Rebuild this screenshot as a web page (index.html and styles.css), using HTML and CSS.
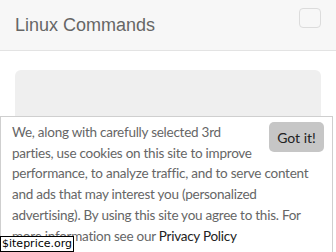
FILE: index.html
```html
<!DOCTYPE html>
<html>
<head>
<meta charset="utf-8">
<link rel="stylesheet" href="styles.css">
</head>
<body>
<header class="topbar">
  <span class="title">Linux Commands</span>
  <span class="toggler"></span>
</header>
<main class="content">
  <div class="placeholder"></div>
</main>
<div class="cookie">
  <button class="got">Got it!</button>
  <p class="cookie-text">We, along with carefully selected 3rd parties, use cookies on this site to improve performance, to analyze traffic, and to serve content and ads that may interest you (personalized advertising). By using this site you agree to this. For more information see our <a class="policy">Privacy Policy</a></p>
</div>
<div class="mark">$iteprice.org</div>
</body>
</html>
```
FILE: styles.css
```css
* { box-sizing: border-box; }
html, body { margin: 0; padding: 0; }
body {
  width: 336px;
  height: 252px;
  overflow: hidden;
  background: #fff;
  font-family: "Liberation Sans", Arial, sans-serif;
}
.topbar {
  height: 51px;
  background: #f7f7f7;
  border-bottom: 1px solid #e3e3e3;
  display: flex;
  align-items: center;
  justify-content: space-between;
  padding: 0 15px;
}
.title {
  font-size: 18px;
  color: #666;
}
.toggler {
  align-self: flex-start;
  margin-top: 8px;
  width: 22px;
  height: 20px;
  border: 1px solid #dcdcdc;
  border-radius: 4px;
}
.content {
  padding: 19px 15px 0;
}
.placeholder {
  height: 170px;
  background: #efefef;
  border-radius: 6px;
}
.cookie {
  position: fixed;
  left: 0;
  top: 116px;
  bottom: 0;
  width: 333px;
  background: #fff;
  border: 1px solid #cfcfcf;
  border-bottom: none;
  padding: 5px 8px 0 11px;
  font-family: Lato, "Open Sans", sans-serif;
  font-size: 13.5px;
  letter-spacing: -0.25px;
  line-height: 20.7px;
  color: #666;
  overflow: hidden;
}
.got {
  float: right;
  width: 55px;
  height: 30px;
  margin: 0 0 4px 10px;
  border: none;
  border-radius: 5px;
  background: #c6c6c6;
  color: #222;
  font-family: Lato, "Open Sans", sans-serif;
  font-size: 14px;
  letter-spacing: 0;
  padding: 0;
}
.cookie-text { margin: 0; }
.policy { color: #222; text-decoration: none; }
.mark {
  position: fixed;
  left: 0;
  top: 236px;
  height: 16px;
  padding: 0 1px 0 1px;
  background: #fff;
  border: 1px solid #000;
  font-family: "DejaVu Sans", sans-serif;
  font-size: 11px;
  line-height: 14px;
  color: #000;
}
```
